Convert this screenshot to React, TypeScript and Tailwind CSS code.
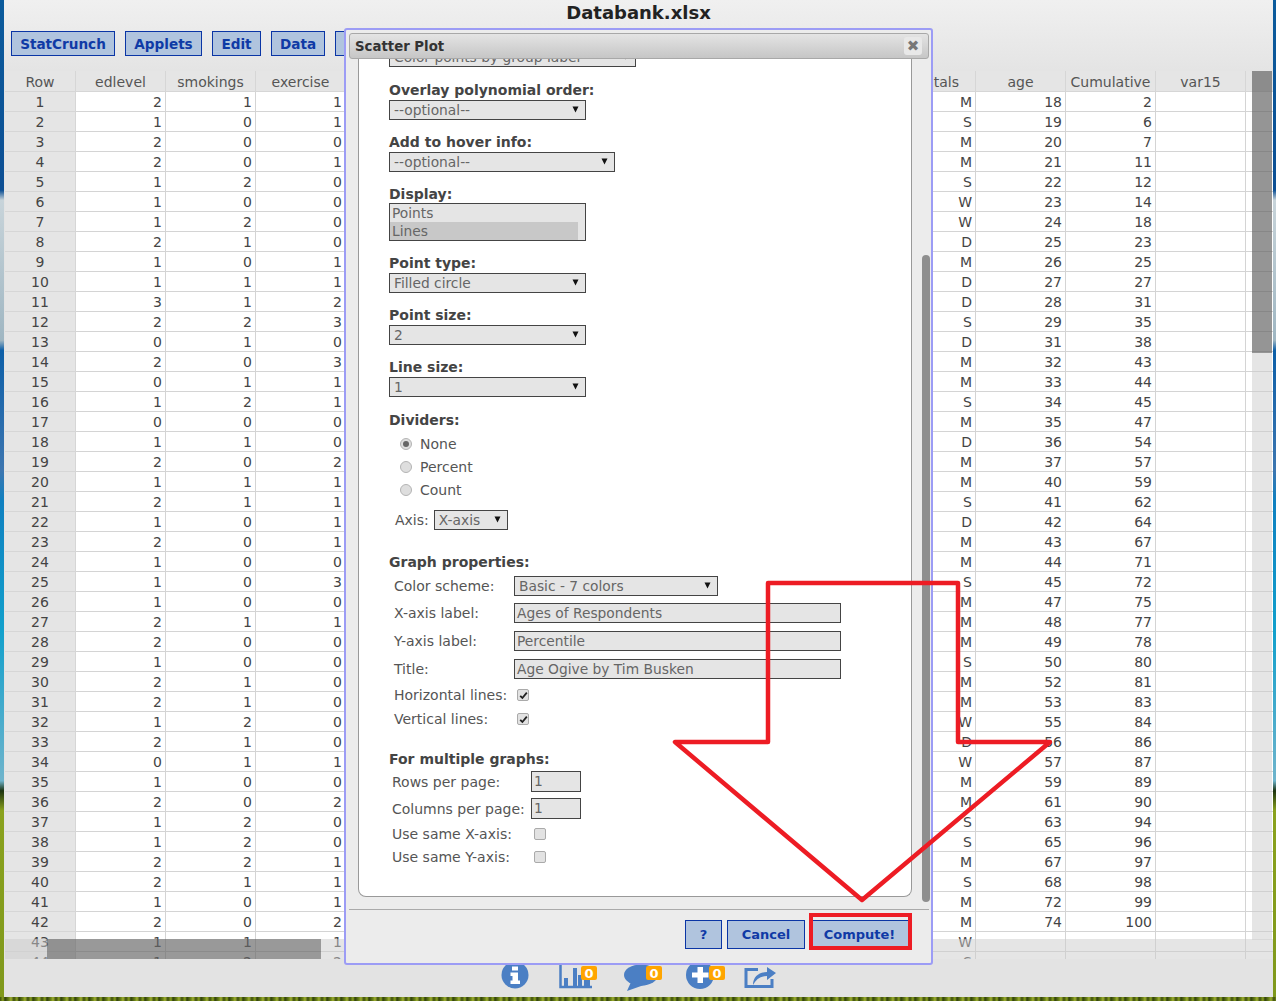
import React from "react";

const ed = [2,1,2,2,1,1,1,2,1,1,3,2,0,2,0,1,0,1,2,1,2,1,2,1,1,1,2,2,1,2,2,1,2,0,1,2,1,1,2,2,1,2,1,1];
const sm = [1,0,0,0,2,0,2,1,0,1,1,2,1,0,1,2,0,1,0,1,1,0,0,0,0,0,1,0,0,1,1,2,1,1,0,0,2,2,2,1,0,0,1,2];
const ex = [1,1,0,1,0,0,0,0,1,1,2,3,0,3,1,1,0,0,2,1,1,1,1,0,3,0,1,0,0,0,0,0,0,1,0,2,0,0,1,1,1,2,1,2];
const mar = "MSMMSWWDMDDSDMMSMDMMSDMMSMMMSMMWDWMMSSMSMMWS".split("");
const age = [18,19,20,21,22,23,24,25,26,27,28,29,31,32,33,34,35,36,37,40,41,42,43,44,45,47,48,49,50,52,53,55,56,57,59,61,63,65,67,68,72,74];
const cum = [2,6,7,11,12,14,18,23,25,27,31,35,38,43,44,45,47,54,57,59,62,64,67,71,72,75,77,78,80,81,83,84,86,87,89,90,94,96,97,98,99,100];
const blanks = [0, 1, 2, 3, 4, 5];

function Head({ t, w = "w-[90px]" }: { t: string; w?: string }) {
  return (
    <div className={`${w} h-[21px] shrink-0 border-r border-b border-[#d6d6d6] bg-[#e5e5e5] text-center leading-[23px] text-[#555]`}>
      {t}
    </div>
  );
}

function Cell({ t }: { t?: string | number }) {
  return (
    <div className="h-[20px] w-[90px] shrink-0 border-r border-b border-[#d4d4d4] bg-white pr-[3px] text-right leading-[20px] text-[#444]">
      {t}
    </div>
  );
}

function Row({ i }: { i: number }) {
  return (
    <div className="flex">
      <div className="h-[20px] w-[71px] shrink-0 border-r border-b border-[#d6d6d6] bg-[#e5e5e5] text-center leading-[20px] text-[#444]">
        {i + 1}
      </div>
      <Cell t={ed[i]} />
      <Cell t={sm[i]} />
      <Cell t={ex[i]} />
      {blanks.map((b) => (
        <Cell key={b} />
      ))}
      <Cell t={mar[i]} />
      <Cell t={age[i]} />
      <Cell t={cum[i]} />
      <Cell />
      <Cell />
    </div>
  );
}

function Tri() {
  return (
    <svg width="7" height="7" viewBox="0 0 7 7" className="absolute right-[6px] top-[5px]">
      <polygon points="0.5,0.5 6.5,0.5 3.5,6.5" fill="#111" />
    </svg>
  );
}

function Sel({ t, w, className = "" }: { t: string; w: string; className?: string }) {
  return (
    <div className={`relative h-[20px] ${w} border border-[#444] bg-[#e5e5e5] pl-[4px] text-[13.8px] leading-[19px] text-[#666] ${className}`}>
      {t}
      <Tri />
    </div>
  );
}

function Lab({ t, className = "" }: { t: string; className?: string }) {
  return <div className={`h-[20px] text-[14px] leading-[20px] font-bold text-[#444] ${className}`}>{t}</div>;
}

function TextField({ t, w, h = "h-[20px]", className = "" }: { t: string; w: string; h?: string; className?: string }) {
  return (
    <div className={`${h} ${w} border border-[#444] bg-[#e5e5e5] pl-[2px] text-[13.8px] leading-[19px] text-[#666] ${className}`}>{t}</div>
  );
}

function Radio({ t, on }: { t: string; on?: boolean }) {
  return (
    <div className="ml-[11px] flex h-[23px] items-center gap-[8px] text-[14px] text-[#555]">
      <span className="flex h-[12px] w-[12px] items-center justify-center rounded-full border border-[#b4b4b4] bg-[#dedede]">
        {on && <span className="h-[6px] w-[6px] rounded-full bg-[#666]" />}
      </span>
      {t}
    </div>
  );
}

function Check({ on }: { on?: boolean }) {
  return (
    <span className="flex h-[12px] w-[12px] items-center justify-center rounded-[2px] border border-[#aaa] bg-[#e2e2e2]">
      {on && (
        <svg width="9" height="9" viewBox="0 0 9 9">
          <path d="M1.2 4.8 L3.4 7 L7.8 1.6" fill="none" stroke="#222" strokeWidth="1.8" />
        </svg>
      )}
    </span>
  );
}

function Badge({ className = "" }: { className?: string }) {
  return (
    <span className={`absolute top-[5px] flex h-[14px] w-[16px] items-center justify-center rounded-[2px] bg-[#ffa500] text-[13px] leading-none font-bold text-white ${className}`}>
      0
    </span>
  );
}

const blue = "#4b7fc4";

function DlgBtn({ t, w }: { t: string; w: string }) {
  return (
    <div className={`${w} flex h-[29px] items-center justify-center border border-[#0a35a5] bg-[#b0c4de] text-[13px] font-bold text-[#0f3aa6]`}>
      {t}
    </div>
  );
}

function TopBtn({ t, w }: { t: string; w: string }) {
  return (
    <div className={`${w} flex h-[25px] shrink-0 items-center justify-center border border-[#0a35a5] bg-[#b0c4de] pt-[2px] text-[13.6px] font-bold text-[#0f3aa6]`}>
      {t}
    </div>
  );
}

export default function App() {
  const font = { fontFamily: '"DejaVu Sans", sans-serif' };
  return (
    <div
      style={font}
      className="relative h-[1001px] w-[1276px] overflow-hidden bg-[linear-gradient(180deg,#0b5b9c_0%,#0d4f94_19%,#c8d4da_20%,#9fb6c2_34%,#0d5fa8_35%,#3d76b0_47%,#0f80c0_50%,#12a0cc_63%,#6fb4cc_78%,#1c3310_79%,#8aa21e_81%,#7f981c_100%)]"
    >
      <div className="ml-[4px] h-[997px] w-[1269px] bg-[#e3e3e3]">
        <div className="h-[71px] bg-[linear-gradient(180deg,#f0f0f0,#e4e4e4)]">
          <div className="h-[24px] text-center text-[18px] leading-[26px] font-bold text-[#222]">Databank.xlsx</div>
          <div className="mt-[7px] flex gap-[10px] pl-[7px]">
            <TopBtn t="StatCrunch" w="w-[104px]" />
            <TopBtn t="Applets" w="w-[77px]" />
            <TopBtn t="Edit" w="w-[49px]" />
            <TopBtn t="Data" w="w-[54px]" />
            <TopBtn t="Stat" w="w-[54px]" />
          </div>
        </div>

        <div className="relative ml-[1px] h-[888px] overflow-hidden text-[14px]">
          <div className="flex">
            <Head t="Row" w="w-[71px]" />
            <Head t="edlevel" />
            <Head t="smokings" />
            <Head t="exercise" />
            {blanks.map((b) => (
              <Head key={b} t="" />
            ))}
            <Head t="maritals" />
            <Head t="age" />
            <Head t="Cumulative" />
            <Head t="var15" />
            <Head t="" />
          </div>
          {ed.map((_, i) => (
            <Row key={i} i={i} />
          ))}
          <div className="absolute right-[1px] top-0 h-[869px] w-[20px] bg-[#ccc]/50">
            <div className="h-[282px] bg-black/35" />
          </div>
          <div className="absolute bottom-0 left-0 h-[20px] w-[1268px] bg-[#ccc]/50">
            <div className="ml-[42px] h-[20px] w-[274px] bg-black/33" />
          </div>
        </div>

        <div className="flex h-[38px] items-start pt-[2px]">
          <svg width="28" height="34" viewBox="0 0 28 34" className="ml-[497px]">
            <circle cx="14" cy="14" r="13.5" fill={blue} />
            <path d="M11 5.5h6v4h-6z M9.5 11.5h7.5v8h2v3.5h-9.5v-3.5h2v-4.500h-2z" fill="#fff" />
          </svg>
          <div className="relative ml-[30px] h-[34px] w-[38px]">
            <svg width="38" height="34" viewBox="0 0 38 34">
              <path d="M1.500 3 V26 H33" fill="none" stroke={blue} strokeWidth="2.500" />
              <path d="M5 17h4v8h-4z M14 7h4v18h-4z M19 14h4v11h-4z M25 19h6v6h-6z" fill={blue} />
            </svg>
            <Badge className="right-0" />
          </div>
          <div className="relative ml-[27px] h-[34px] w-[38px]">
            <svg width="38" height="34" viewBox="0 0 38 34">
              <ellipse cx="17" cy="14" rx="17" ry="10.500" fill={blue} />
              <path d="M7 21 L3 30 L20 24z" fill={blue} />
            </svg>
            <Badge className="right-0" />
          </div>
          <div className="relative ml-[24px] h-[34px] w-[39px]">
            <svg width="39" height="34" viewBox="0 0 39 34">
              <circle cx="14" cy="14" r="14" fill={blue} />
              <path d="M11.500 6h5.500v5.500h5.500v5h-5.500v5.500h-5.500v-5.500h-5.500v-5h5.500z" fill="#fff" />
            </svg>
            <Badge className="right-0" />
          </div>
          <svg width="33" height="34" viewBox="0 0 33 34" className="ml-[19px]">
            <path d="M14 8.500H2V25.500H28V18" fill="none" stroke={blue} strokeWidth="3" />
            <path d="M9 24C9 15 16 11 23 11V6L32 12L23 19V15C17 15 12 18 9 24Z" fill={blue} />
          </svg>
        </div>
      </div>
      <div className="h-[4px] bg-[repeating-linear-gradient(90deg,#3f520e_0px,#8aa020_3px,#2f3f0c_5px,#6d8518_9px,#a0b030_11px,#3a4a10_14px)]" />

      <div className="absolute left-[344px] top-[28px] flex h-[937px] w-[589px] flex-col rounded-[3px] border-2 border-[#9c9cf5] bg-[#ececec] pt-[3px] pl-[3px]">
        <div className="relative flex h-[26px] w-[580px] shrink-0 items-center rounded-[3px] border border-[#a8a8a8] bg-[linear-gradient(180deg,#e4e4e4,#c6c6c6)] pt-[2px] pl-[5px] text-[13.300px] font-bold text-[#333]">
          Scatter Plot
          <span className="absolute right-[6px] top-[3px] flex h-[18px] w-[18px] items-center justify-center rounded-[3px] bg-[#e8e8e8] text-[15px] font-bold text-[#777]">
            ✖
          </span>
        </div>

        <div className="relative ml-[9px] h-[838px] w-[554px] shrink-0 overflow-hidden rounded-b-[8px] border-x border-b border-[#999] bg-white pl-[30px] text-[14px] leading-[20px] text-[#555]">
          <Sel t="Color points by group label" w="w-[247px]" className="mt-[-12px]" />
          <Lab t="Overlay polynomial order:" className="mt-[13px]" />
          <Sel t="--optional--" w="w-[197px]" />
          <Lab t="Add to hover info:" className="mt-[12px]" />
          <Sel t="--optional--" w="w-[226px]" />
          <Lab t="Display:" className="mt-[12px]" />
          <div className="mt-[-1px] h-[38px] w-[197px] border border-[#444] bg-[#e5e5e5] text-[13.800px] leading-[18px] text-[#666]">
            <div className="pl-[2px]">Points</div>
            <div className="mr-[7px] bg-[#c8c8c8] pl-[2px]">Lines</div>
          </div>
          <Lab t="Point type:" className="mt-[12px]" />
          <Sel t="Filled circle" w="w-[197px]" />
          <Lab t="Point size:" className="mt-[12px]" />
          <Sel t="2" w="w-[197px]" />
          <Lab t="Line size:" className="mt-[12px]" />
          <Sel t="1" w="w-[197px]" />
          <Lab t="Dividers:" className="mt-[13px]" />
          <div className="mt-[2px]">
            <Radio t="None" on />
            <Radio t="Percent" />
            <Radio t="Count" />
          </div>
          <div className="mt-[9px] ml-[6px] flex items-center gap-[5px]">
            Axis:
            <Sel t="X-axis" w="w-[74px]" />
          </div>
          <Lab t="Graph properties:" className="mt-[22px]" />
          <div className="mt-[4px] ml-[5px] flex items-center">
            <span className="w-[120px]">Color scheme:</span>
            <Sel t="Basic - 7 colors" w="w-[204px]" />
          </div>
          <div className="mt-[7px] ml-[5px] flex items-center">
            <span className="w-[120px]">X-axis label:</span>
            <TextField t="Ages of Respondents" w="w-[327px]" />
          </div>
          <div className="mt-[8px] ml-[5px] flex items-center">
            <span className="w-[120px]">Y-axis label:</span>
            <TextField t="Percentile" w="w-[327px]" />
          </div>
          <div className="mt-[8px] ml-[5px] flex items-center">
            <span className="w-[120px]">Title:</span>
            <TextField t="Age Ogive by Tim Busken" w="w-[327px]" />
          </div>
          <div className="mt-[6px] ml-[5px] flex h-[20px] items-center">
            <span className="w-[123px]">Horizontal lines:</span>
            <Check on />
          </div>
          <div className="mt-[4px] ml-[5px] flex h-[20px] items-center">
            <span className="w-[123px]">Vertical lines:</span>
            <Check on />
          </div>
          <Lab t="For multiple graphs:" className="mt-[20px]" />
          <div className="mt-[2px] ml-[3px] flex items-center">
            <span className="w-[139px]">Rows per page:</span>
            <TextField t="1" w="w-[50px]" h="h-[21px]" />
          </div>
          <div className="mt-[6px] ml-[3px] flex items-center">
            <span className="w-[139px]">Columns per page:</span>
            <TextField t="1" w="w-[50px]" h="h-[21px]" />
          </div>
          <div className="mt-[5px] ml-[3px] flex h-[20px] items-center">
            <span className="w-[142px]">Use same X-axis:</span>
            <Check />
          </div>
          <div className="mt-[3px] ml-[3px] flex h-[20px] items-center">
            <span className="w-[142px]">Use same Y-axis:</span>
            <Check />
          </div>
        </div>

        <div className="mt-[12px] h-[1px] w-[580px] shrink-0 bg-[#aaa]" />
        <div className="mt-[10px] flex w-[580px] justify-end gap-[5px] pr-[20px]">
          <DlgBtn t="?" w="w-[37px]" />
          <DlgBtn t="Cancel" w="w-[78px]" />
          <DlgBtn t="Compute!" w="w-[99px]" />
        </div>
        <div className="absolute left-[576px] top-[225px] h-[647px] w-[8px] rounded-[4px] bg-[#8f8f8f]" />
      </div>

      <svg width="1276" height="1001" viewBox="0 0 1276 1001" className="pointer-events-none absolute left-0 top-0">
        <polygon points="768,583 958,583 958,742 1050,742 862,900 675,742 768,742" fill="none" stroke="#ed1c24" strokeWidth="4.5" strokeLinejoin="round" />
        <rect x="811" y="915" width="99" height="33" fill="none" stroke="#ed1c24" strokeWidth="4" />
      </svg>
    </div>
  );
}
